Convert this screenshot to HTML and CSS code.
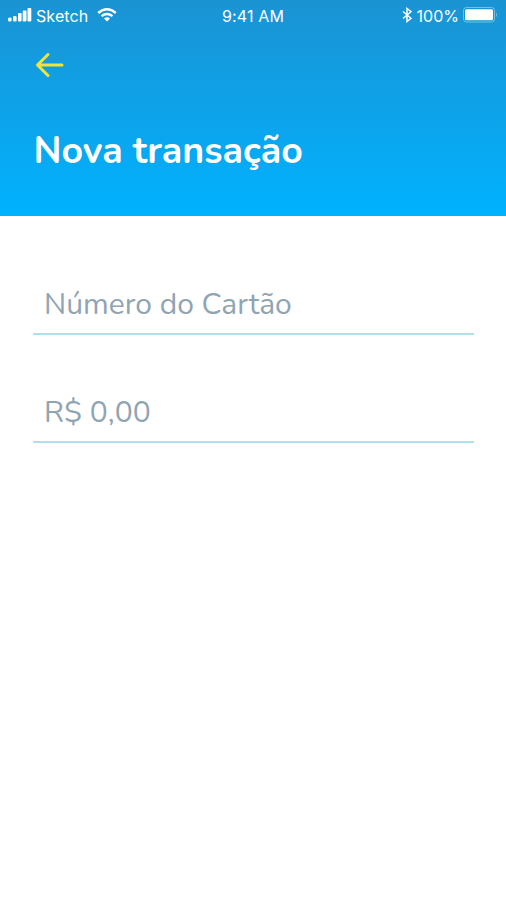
FILE: index.html
```html
<!DOCTYPE html>
<html lang="pt-BR">
<head>
<meta charset="utf-8">
<title>Nova transação</title>
<link rel="stylesheet" href="styles.css">
</head>
<body>
<header class="header">
  <div class="status">
    <div class="status-left">
      <svg class="signal" width="24" height="14" viewBox="0 0 24 14" fill="#fff"><rect x="0" y="9.500" width="3.600" height="4" rx="1.500"/><rect x="5" y="8" width="3.600" height="5.500" rx="1.200"/><rect x="10" y="5" width="3.600" height="8.500" rx="1"/><rect x="14.700" y="2.500" width="3.800" height="11" rx="1"/><rect x="19.500" y="0" width="3.800" height="13.500" rx="1"/></svg>
      <span class="carrier">Sketch</span>
      <svg class="wifi" width="20" height="14" viewBox="0 0 20 14" fill="none" stroke="#fff" stroke-width="2.300"><path d="M1.200 5Q10-2.500 18.800 5M4.500 8.200Q10 3.800 15.500 8.200"/><path d="M7 10.500Q10 8.200 13 10.500L10 13.500Z" fill="#fff" stroke="none"/></svg>
    </div>
    <span class="time">9:41 AM</span>
    <div class="status-right">
      <svg class="bluetooth" width="10" height="16" viewBox="0 0 10 16" fill="none" stroke="#fff" stroke-width="1.500"><path d="M1 4.500L9 11.300L5 14.500V1.500L9 4.700L1 11.500"/></svg>
      <span class="percent">100%</span>
      <svg class="battery" width="35" height="16" viewBox="0 0 35 16"><rect x=".5" y=".5" width="31" height="14.500" rx="3" fill="none" stroke="#fff" stroke-opacity=".4"/><rect x="2" y="2.200" width="28" height="11" rx="1.500" fill="#fff"/><path d="M33 5.500Q35 7.800 33 10Z" fill="#fff" opacity=".4"/></svg>
    </div>
  </div>
  <svg class="back" width="30" height="26" viewBox="0 0 30 26"><path d="M27 13H3M13 2.500L2.500 13L13 23.500"/></svg>
  <h1 class="title">Nova transação</h1>
</header>
<main class="form">
  <div class="field">Número do Cartão</div>
  <div class="field">R$ 0,00</div>
</main>
</body>
</html>
```
FILE: styles.css
```css
*{box-sizing:border-box}
body{margin:0;background:#fff;font-family:Inter,sans-serif}
svg{display:block;flex:none}
.header{height:216px;background:linear-gradient(#1b93d3,#00b2ff);color:#fff;overflow:hidden}
.status{height:32px;padding:0 8px 0 8px;display:grid;grid-template-columns:1fr auto 1fr;align-items:center;font-size:16px}
.status-left,.status-right{display:flex;align-items:center}
.status-right{justify-content:flex-end}
.signal{margin-top:-2px}
.carrier{margin:0 9px 0 4px;letter-spacing:.1px}
.wifi{margin-top:-3px}
.time{letter-spacing:.15px}
.bluetooth,.battery{position:relative;top:-1px}
.percent{margin:0 4px 0 5px}
.back{margin:20px 0 0 35px;fill:none;stroke:#eee43a;stroke-width:3;stroke-linecap:round;stroke-linejoin:round}
.title{margin:48px 0 0 33.5px;font:700 37.5px/50px Nunito,Lato,sans-serif;white-space:nowrap}
.form{padding:66px 32px 0 33px}
.field{height:53px;margin-bottom:55px;padding:5px 0 0 11px;border-bottom:2px solid #b2dfec;font:400 30px/36px Nunito,Lato,sans-serif;color:#90a4b2;white-space:nowrap}
```
